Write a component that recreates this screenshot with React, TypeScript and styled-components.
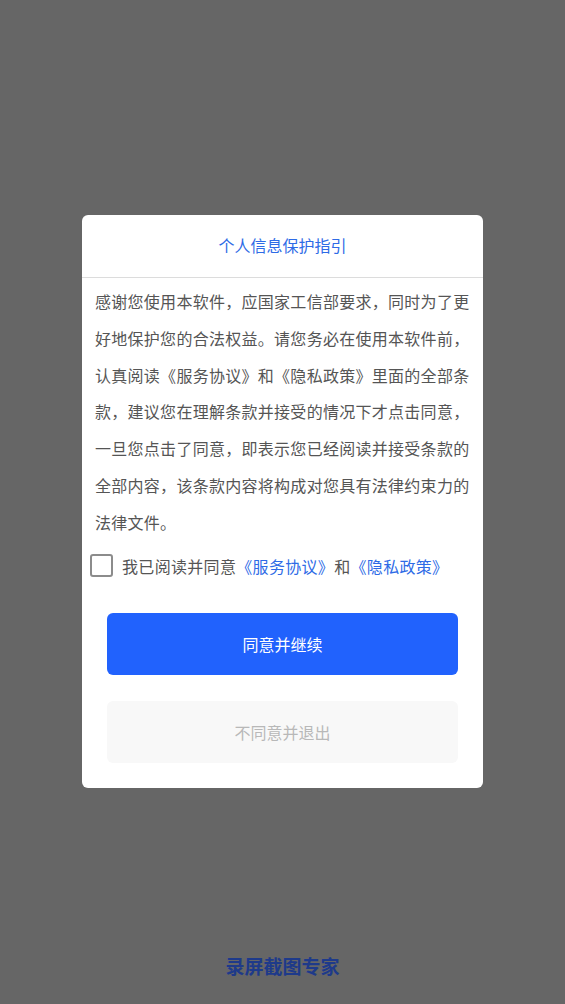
import React, { useState } from 'react';
import styled, { createGlobalStyle } from 'styled-components';

const GlobalStyle = createGlobalStyle`
  * { box-sizing: border-box; }
  html, body { margin: 0; padding: 0; }
  body {
    font-family: "Noto Sans CJK SC", "Noto Sans", sans-serif;
    background: #666666;
  }
`;

const Screen = styled.div`
  min-height: 1004px;
  display: flex;
  flex-direction: column;
  align-items: center;
  background: #666666;
`;

const Dialog = styled.div`
  width: 401px;
  margin-top: 215px;
  background: #ffffff;
  border-radius: 6px;
  display: flex;
  flex-direction: column;
`;

const Header = styled.div`
  height: 63px;
  display: flex;
  align-items: center;
  justify-content: center;
  border-bottom: 1px solid #dcdcdc;
  color: #2e6be6;
  font-size: 16px;
  padding-bottom: 2px;
`;

const Body = styled.div`
  padding: 5px 13px 25px;
  display: flex;
  flex-direction: column;
`;

const Paragraph = styled.p`
  margin: 0;
  font-size: 16px;
  line-height: 36.8px;
  letter-spacing: 0.28px;
  color: #555555;
`;

const AgreeRow = styled.label`
  display: flex;
  align-items: center;
  gap: 9px;
  margin: 13px 0 0 -5px;
  font-size: 16px;
  letter-spacing: 0.32px;
  color: #555555;
  cursor: pointer;
`;

const Box = styled.span<{ $checked: boolean }>`
  width: 23px;
  height: 23px;
  border: 2px solid #8c8c8c;
  border-radius: 3px;
  display: flex;
  align-items: center;
  justify-content: center;
  background: ${p => (p.$checked ? '#2162fd' : '#fff')};
  border-color: ${p => (p.$checked ? '#2162fd' : '#8c8c8c')};
`;

const Link = styled.span`
  color: #2e6be6;
`;

const Actions = styled.div`
  display: flex;
  flex-direction: column;
  gap: 26px;
  padding: 0 12px;
  margin-top: 35px;
`;

const Button = styled.button<{ $primary?: boolean }>`
  height: 62px;
  border: none;
  border-radius: 6px;
  font-family: inherit;
  font-size: 16px;
  background: ${p => (p.$primary ? '#2162fd' : '#f8f8f8')};
  color: ${p => (p.$primary ? '#ffffff' : '#b8b8b8')};
  cursor: pointer;
`;

const Brand = styled.div`
  margin-top: auto;
  padding-bottom: 25px;
  font-size: 19px;
  font-weight: 700;
  color: #1e3a8a;
`;

export default function App() {
  const [checked, setChecked] = useState(false);

  return (
    <Screen>
      <GlobalStyle />
      <Dialog>
        <Header>个人信息保护指引</Header>
        <Body>
          <Paragraph>
            感谢您使用本软件，应国家工信部要求，同时为了更好地保护您的合法权益。请您务必在使用本软件前，认真阅读《服务协议》和《隐私政策》里面的全部条款，建议您在理解条款并接受的情况下才点击同意，一旦您点击了同意，即表示您已经阅读并接受条款的全部内容，该条款内容将构成对您具有法律约束力的法律文件。
          </Paragraph>
          <AgreeRow onClick={() => setChecked(!checked)}>
            <Box $checked={checked}>
              {checked && (
                <svg width="14" height="14" viewBox="0 0 14 14">
                  <path d="M2 7l3.5 3.5L12 4" stroke="#fff" strokeWidth="2" fill="none" />
                </svg>
              )}
            </Box>
            <span>
              我已阅读并同意<Link>《服务协议》</Link>和<Link>《隐私政策》</Link>
            </span>
          </AgreeRow>
          <Actions>
            <Button $primary>同意并继续</Button>
            <Button>不同意并退出</Button>
          </Actions>
        </Body>
      </Dialog>
      <Brand>录屏截图专家</Brand>
    </Screen>
  );
}
